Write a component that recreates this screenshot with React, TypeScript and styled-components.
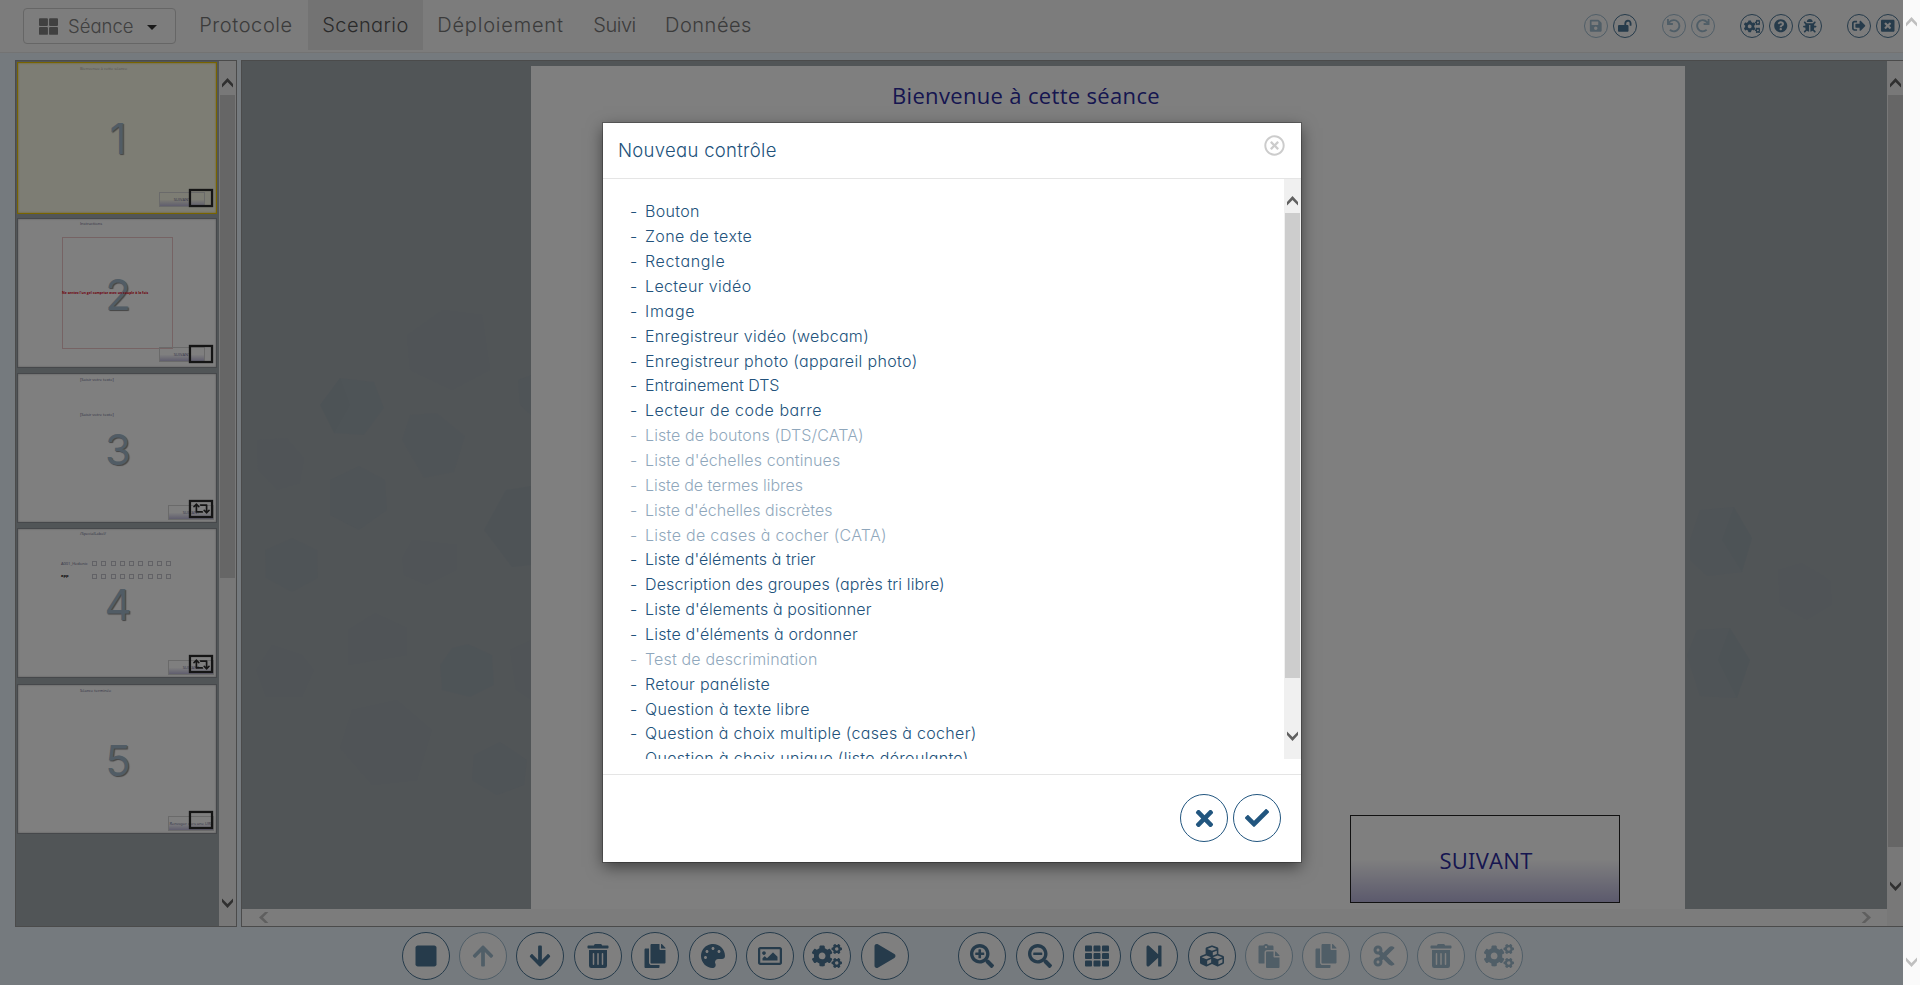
import React from 'react';
import styled, { createGlobalStyle, css } from 'styled-components';
import type { IconType } from 'react-icons';
import {
  FaArrowDown, FaArrowUp, FaBug, FaCheck, FaCogs, FaCopy, FaCubes, FaCut, FaLockOpen, FaPalette, FaPaste,
  FaPlay, FaQuestionCircle, FaRedo, FaRegImage, FaRegTimesCircle, FaRetweet, FaSave, FaSearchMinus,
  FaSearchPlus, FaSignOutAlt, FaStepForward, FaStop, FaTh, FaThLarge, FaTimes, FaTrashAlt, FaUndo, FaWindowClose,
} from 'react-icons/fa';

const GlobalStyle = createGlobalStyle`
  * { box-sizing: border-box; }
  body {
    margin: 0;
    overflow: hidden;
    font-family: Inter, "Liberation Sans", sans-serif;
    font-weight: 300;
    font-feature-settings: "cv11", "ss03";
  }
`;

const Screen = styled.div`
  position: relative;
  display: grid;
  grid-template-columns: 1903px 17px;
  height: 985px;
  overflow: hidden;
`;

const AppArea = styled.div`
  display: flex;
  flex-direction: column;
  min-width: 0;
  background: #ebf5fd;
`;

/* ---------- scroll bars ---------- */

const VTrack = styled.div<{ $bg?: string }>`
  display: flex;
  flex-direction: column;
  justify-content: space-between;
  flex: none;
  width: 17px;
  height: 100%;
  background: ${(p) => p.$bg ?? '#f0f0f0'};
`;
const VButton = styled.div<{ $h: number; $pad: number }>`
  display: flex;
  justify-content: center;
  flex: none;
  height: ${(p) => p.$h}px;
  padding-top: ${(p) => p.$pad}px;
`;
const VThumbArea = styled.div`
  flex: 1;
  padding: 0 1px;
`;
const VThumb = styled.div<{ $h: number }>`
  height: ${(p) => p.$h}px;
  background: #cdcdcd;
`;
const HTrack = styled.div`
  display: flex;
  justify-content: space-between;
  align-items: center;
  height: 17px;
  padding: 0 15px 0 16px;
  background: #f8f8f8;
`;

const turns = { up: 0, right: 90, down: 180, left: 270 };
const Chevron = ({ dir, color = '#606060' }: { dir: keyof typeof turns; color?: string }) => (
  <svg width="11" height="11" viewBox="0 0 11 11">
    <path
      d="M0 7 5.5 1 11 7V10.4L5.5 5 0 10.4Z"
      fill={color}
      transform={`rotate(${turns[dir]} 5.5 5.5)`}
    />
  </svg>
);

const VScroll = ({ thumb, bottom = 28, arrow, bg }: { thumb?: number; bottom?: number; arrow?: string; bg?: string }) => (
  <VTrack $bg={bg}>
    <VButton $h={34} $pad={16}><Chevron dir="up" color={arrow} /></VButton>
    <VThumbArea>{thumb ? <VThumb $h={thumb} /> : null}</VThumbArea>
    <VButton $h={bottom} $pad={0}><Chevron dir="down" color={arrow} /></VButton>
  </VTrack>
);

/* ---------- top bar ---------- */

const TopBar = styled.header`
  display: flex;
  flex: none;
  height: 53px;
  padding: 0 3px 0 23px;
  background: #f8f8f8;
  border-bottom: 1px solid #e7e7e7;
`;
const MenuButton = styled.div`
  display: flex;
  align-items: center;
  width: 153px;
  height: 36px;
  margin: 8px 8px 0 0;
  padding-left: 15px;
  border: 1px solid #ccc;
  border-radius: 4px;
  background: #fafafa;
  color: #808080;
  font-size: 18.5px;
  span { width: 89px; padding-left: 10px; }
`;
const Caret = styled.i`
  border: 5px solid transparent;
  border-top-color: #333;
  border-bottom: 0;
  margin-top: 3px;
`;
const Tab = styled.div<{ $w: number; $active?: boolean; $ls?: number }>`
  display: flex;
  justify-content: center;
  align-items: center;
  width: ${(p) => p.$w}px;
  height: 50px;
  font-size: 20px;
  letter-spacing: ${(p) => p.$ls ?? 0}px;
  color: ${(p) => (p.$active ? '#555' : '#777')};
  background: ${(p) => (p.$active ? '#e7e7e7' : 'transparent')};
`;
const TopTools = styled.div`
  display: flex;
  gap: 25px;
  margin: 14px 0 0 auto;
`;
const ToolGroup = styled.div<{ $gap: number }>`
  display: flex;
  gap: ${(p) => p.$gap}px;
`;
const RoundButton = styled.div<{ $size: number; $off?: boolean; $strong?: boolean; $iconWidth?: number }>`
  display: flex;
  align-items: center;
  justify-content: center;
  flex: none;
  width: ${(p) => p.$size}px;
  height: ${(p) => p.$size}px;
  border: 1px solid;
  border-radius: 50%;
  background: #fff;
  color: ${(p) => (p.$strong ? '#22567f' : p.$off ? '#a0bccf' : '#4c7696')};
  ${(p) => p.$size < 30 && css`background: transparent;`}
  svg {
    flex: none;
    ${(p) => p.$iconWidth && css`width: ${p.$iconWidth}px; height: ${p.$iconWidth}px;`}
  }
`;

/* ---------- work area ---------- */

const Work = styled.main`
  display: flex;
  flex: none;
  gap: 4px;
  height: 867px;
  margin: 7px 0 0 15px;
`;
const SlidePanel = styled.section`
  display: flex;
  width: 222px;
  border: 1px solid #969696;
  background: #a2aaaf;
`;
const SlideList = styled.div`
  display: flex;
  flex-direction: column;
  gap: 5.4px;
  flex: 1;
  padding: 1.2px 2px 0 1px;
`;
const Slide = styled.article<{ $selected?: boolean }>`
  position: relative;
  flex: none;
  height: ${(p) => (p.$selected ? 152 : 150)}px;
  margin-bottom: ${(p) => (p.$selected ? -2 : 0)}px;
  border: 1px solid ${(p) => (p.$selected ? '#f0c800' : '#8c9196')};
  background: ${(p) => (p.$selected ? '#fbfae8' : '#fff')};
  box-shadow: inset 0 0 2px ${(p) => (p.$selected ? '#d8b820' : '#aaa')};
  overflow: hidden;
`;
const SlideNumber = styled.div`
  position: absolute;
  inset: 51px 0 auto 2px;
  text-align: center;
  font-size: 42px;
  line-height: 50px;
  font-weight: 400;
  color: #a3b9ca;
  text-shadow: 1px 1px 1px #888;
`;
const Tiny = styled.div<{ $x: number; $y: number; $color?: string; $bold?: boolean; $size?: number }>`
  position: absolute;
  left: ${(p) => p.$x}px;
  top: ${(p) => p.$y}px;
  font: ${(p) => (p.$bold ? 700 : 400)} ${(p) => p.$size ?? 4}px/6px "Open Sans", sans-serif;
  color: ${(p) => p.$color ?? '#666688'};
  white-space: nowrap;
`;
const TinyButton = styled.div<{ $x: number; $y: number }>`
  position: absolute;
  left: ${(p) => p.$x}px;
  top: ${(p) => p.$y}px;
  width: 46px;
  height: 15px;
  border: 1px solid #d4d4d4;
  background: linear-gradient(transparent 50%, #c0bcdc);
  font: 4px/13px "Open Sans", sans-serif;
  text-align: center;
  color: #6a6a90;
  white-space: nowrap;
`;
const SlideBadge = styled.div`
  position: absolute;
  right: 3px;
  top: 126px;
  display: flex;
  align-items: center;
  justify-content: center;
  width: 24px;
  height: 18px;
  border: 2px solid #2a2a2a;
  box-shadow: 0 0 1px #2a2a2a, inset 0 0 1px #2a2a2a;
  color: #2a2a2a;
`;
const TinyFrame = styled.div`
  position: absolute;
  left: 44px;
  top: 18px;
  width: 111px;
  height: 112px;
  border: 1px solid #ecc6c8;
`;
const TinyChecks = styled.div<{ $y: number }>`
  position: absolute;
  left: 74px;
  top: ${(p) => p.$y}px;
  display: flex;
  gap: 4.3px;
  i { width: 5px; height: 5px; border: 1px solid #c4c4cc; }
`;

const StagePanel = styled.section`
  display: flex;
  flex: 1;
  margin-right: -1px;
  border: 1px solid #969696;
  border-right: 0;
  background: #a2aaaf;
`;
const StageColumn = styled.div`
  display: flex;
  flex-direction: column;
  flex: 1;
`;
const Stage = styled.div`
  position: relative;
  flex: 1;
  padding: 5px 0 0 289px;
`;
const Hexagons = styled.svg`
  position: absolute;
  inset: 0;
`;
const Page = styled.div`
  position: relative;
  display: flex;
  flex-direction: column;
  width: 1154px;
  height: 100%;
  padding: 0 65px 6px;
  background: #fff;
  color: #2c2ca0;
  font-family: "Open Sans", sans-serif;
  font-weight: 400;
`;
const PageTitle = styled.div`
  padding: 13px 0 0 296px;
  font-size: 22px;
  line-height: 32px;
  letter-spacing: 0.33px;
`;
const NextButton = styled.div`
  display: flex;
  align-items: center;
  justify-content: center;
  width: 270px;
  height: 88px;
  margin: auto 0 0 auto;
  padding: 2px 0 0 2px;
  border: 1px solid #222;
  background: linear-gradient(#fff 50%, #b8b4da);
  font-size: 22px;
  letter-spacing: 0.3px;
`;

const hexes: [string, number][] = [
  ['165,335 200,310 240,315 248,370 210,390 168,370', 0.25],
  ['78,405 98,378 132,382 142,408 122,435 92,433', 0.9],
  ['98,378 108,405 92,433 78,405', 0.7],
  ['160,440 168,415 195,413 223,436 212,472 182,478', 0.5],
  ['15,440 45,438 62,458 58,483 35,490 16,470', 0.3],
  ['88,480 117,466 143,480 145,510 117,530 88,515', 0.8],
  ['242,530 264,490 289,486 289,565 270,567', 1.1],
  ['160,558 170,540 215,545 215,570 185,585 162,575', 0.4],
  ['23,550 50,538 75,550 76,578 50,592 24,578', 0.5],
  ['106,630 133,613 165,628 165,655 106,665', 0.4],
  ['14,670 30,645 60,655 72,670 60,697 24,697', 0.4],
  ['198,665 210,648 226,644 250,655 252,685 228,697 200,690', 0.9],
  ['98,748 110,710 155,700 190,730 175,780 130,785', 0.4],
  ['232,755 258,742 285,760 282,785 255,795 230,780', 0.7],
  ['276,380 289,375 289,415 278,405', 0.8],
  ['268,650 289,640 289,700 274,690', 0.4],
  ['1448,540 1458,510 1492,507 1510,538 1500,572 1465,576 1448,560', 0.8],
  ['1492,507 1510,538 1500,572 1480,540', 0.6],
  ['1536,570 1560,563 1588,580 1590,605 1565,620 1538,605', 0.3],
  ['1445,655 1455,630 1488,628 1508,660 1495,698 1458,696', 0.8],
  ['1488,628 1508,660 1495,698 1476,660', 0.6],
];

/* ---------- bottom bar ---------- */

const BottomBar = styled.footer`
  display: flex;
  gap: 49.4px;
  padding: 5px 0 0 401.6px;
`;

/* ---------- dialog ---------- */

const Overlay = styled.div`
  position: absolute;
  left: 0;
  top: 0;
  width: 1903px;
  height: 985px;
  padding: 123px 0 0 603px;
  background: rgba(0, 0, 0, 0.5);
`;
const Dialog = styled.div`
  display: flex;
  flex-direction: column;
  width: 698px;
  height: 739px;
  background: #fff;
  color: #22527b;
  box-shadow: 0 0 0 1px rgba(0, 0, 0, 0.25), 0 5px 15px rgba(0, 0, 0, 0.5);
`;
const DialogHeader = styled.div`
  display: flex;
  justify-content: space-between;
  height: 56px;
  padding: 12px 16px 0 15px;
  border-bottom: 1px solid #e5e5e5;
  font-size: 18.5px;
  line-height: 30px;
  letter-spacing: 0.3px;
`;
const DialogBody = styled.div`
  display: flex;
  justify-content: space-between;
  height: 580px;
  overflow: hidden;
`;
const ControlList = styled.ul`
  margin: 0;
  padding: 20.4px 0 0 27px;
  list-style: none;
`;
const ControlItem = styled.li<{ $off?: boolean; $ls: number }>`
  display: flex;
  height: 24.86px;
  font-size: 16px;
  line-height: 25px;
  letter-spacing: ${(p) => p.$ls}px;
  white-space: nowrap;
  opacity: ${(p) => (p.$off ? 0.5 : 1)};
  &::before { content: "-"; width: 15px; }
`;
const DialogFooter = styled.div`
  display: flex;
  justify-content: flex-end;
  gap: 5px;
  height: 88px;
  margin-top: 15px;
  padding: 19px 20px 0 0;
  border-top: 1px solid #e5e5e5;
`;

type Tool = [IconType, boolean?];
const topTools: Tool[][] = [
  [[FaSave, true], [FaLockOpen]],
  [[FaUndo, true], [FaRedo, true]],
  [[FaCogs], [FaQuestionCircle], [FaBug]],
  [[FaSignOutAlt], [FaWindowClose]],
];
const bottomTools: Tool[][] = [
  [[FaStop], [FaArrowUp, true], [FaArrowDown], [FaTrashAlt], [FaCopy], [FaPalette], [FaRegImage], [FaCogs], [FaPlay]],
  [[FaSearchPlus], [FaSearchMinus], [FaTh], [FaStepForward], [FaCubes], [FaPaste, true], [FaCopy, true], [FaCut, true], [FaTrashAlt, true], [FaCogs, true]],
];
const controls: { label: string; off?: boolean; ls?: number }[] = [
  { label: 'Bouton', ls: 0.3 },
  { label: 'Zone de texte', ls: 0.38 },
  { label: 'Rectangle', ls: 0.65 },
  { label: 'Lecteur vidéo', ls: 0.36 },
  { label: 'Image', ls: 0.7 },
  { label: 'Enregistreur vidéo (webcam)', ls: 0.32 },
  { label: 'Enregistreur photo (appareil photo)', ls: 0.35 },
  { label: 'Entrainement DTS' },
  { label: 'Lecteur de code barre', ls: 0.52 },
  { label: 'Liste de boutons (DTS/CATA)', off: true, ls: 0.1 },
  { label: "Liste d'échelles continues", off: true, ls: 0.1 },
  { label: 'Liste de termes libres', off: true, ls: -0.04 },
  { label: "Liste d'échelles discrètes", off: true },
  { label: 'Liste de cases à cocher (CATA)', off: true, ls: 0.27 },
  { label: "Liste d'éléments à trier", ls: 0.05 },
  { label: 'Description des groupes (après tri libre)', ls: 0.12 },
  { label: "Liste d'élements à positionner", ls: 0.12 },
  { label: "Liste d'éléments à ordonner", ls: 0.18 },
  { label: 'Test de descrimination', off: true, ls: 0.16 },
  { label: 'Retour panéliste', ls: 0.27 },
  { label: 'Question à texte libre', ls: 0.32 },
  { label: 'Question à choix multiple (cases à cocher)', ls: 0.31 },
  { label: 'Question à choix unique (liste déroulante)', ls: 0.32 },
];

const Tools = ({ groups, size, icon, gap }: { groups: Tool[][]; size: number; icon: number; gap: number }) => (
  <>
    {groups.map((group, g) => (
      <ToolGroup key={g} $gap={gap}>
        {group.map(([Icon, off], i) => (
          <RoundButton key={i} $size={size} $off={off} $iconWidth={Icon === FaCogs ? icon * 1.25 : icon}>
            <Icon />
          </RoundButton>
        ))}
      </ToolGroup>
    ))}
  </>
);

export default function App() {
  return (
    <Screen>
      <GlobalStyle />
      <AppArea>
        <TopBar>
          <MenuButton><FaThLarge size={19} /><span>Séance</span><Caret /></MenuButton>
          <Tab $w={124} $ls={0.6}>Protocole</Tab>
          <Tab $w={115} $ls={0.4} $active>Scenario</Tab>
          <Tab $w={155} $ls={0.8}>Déploiement</Tab>
          <Tab $w={73} $ls={-0.5}>Suivi</Tab>
          <Tab $w={115} $ls={0.5}>Données</Tab>
          <TopTools><Tools groups={topTools} size={24} icon={13.5} gap={5} /></TopTools>
        </TopBar>

        <Work>
          <SlidePanel>
            <SlideList>
              <Slide $selected>
                <Tiny $x={62} $y={3} $color="#aaa">Bienvenue à cette séance</Tiny>
                <TinyButton $x={141} $y={129}>SUIVANT</TinyButton>
                <SlideNumber>1</SlideNumber>
                <SlideBadge />
              </Slide>
              <Slide>
                <Tiny $x={62} $y={2}>Instructions</Tiny>
                <TinyFrame />
                <SlideNumber>2</SlideNumber>
                <Tiny $x={44} $y={71} $color="#e00018" $bold $size={3.4}>Ne sentez l'un gel comprise avec un couple à la fois</Tiny>
                <TinyButton $x={141} $y={128}>SUIVANT</TinyButton>
                <SlideBadge />
              </Slide>
              <Slide>
                <Tiny $x={62} $y={3}>[Saisir votre texte]</Tiny>
                <Tiny $x={62} $y={38}>[Saisir votre texte]</Tiny>
                <SlideNumber>3</SlideNumber>
                <TinyButton $x={150} $y={131}>SUIVANT</TinyButton>
                <SlideBadge><FaRetweet size={17} /></SlideBadge>
              </Slide>
              <Slide>
                <Tiny $x={62} $y={2}>/SpecialLabel/</Tiny>
                <Tiny $x={43} $y={32}>A001_Hedonic</Tiny>
                <TinyChecks $y={32}>{Array.from({ length: 9 }, (_, i) => <i key={i} />)}</TinyChecks>
                <Tiny $x={43} $y={44} $color="#111" $bold>app</Tiny>
                <TinyChecks $y={45}>{Array.from({ length: 9 }, (_, i) => <i key={i} />)}</TinyChecks>
                <SlideNumber>4</SlideNumber>
                <TinyButton $x={150} $y={131}>SUIVANT</TinyButton>
                <SlideBadge><FaRetweet size={17} /></SlideBadge>
              </Slide>
              <Slide>
                <Tiny $x={62} $y={3}>Séance terminée</Tiny>
                <SlideNumber>5</SlideNumber>
                <TinyButton $x={150} $y={131}>Renvoyer vers une URL</TinyButton>
                <SlideBadge />
              </Slide>
            </SlideList>
            <VScroll thumb={483} />
          </SlidePanel>

          <StagePanel>
            <StageColumn>
              <Stage>
                <Hexagons width="1645" height="848">
                  {hexes.map(([points, o], i) => (
                    <polygon key={i} points={points} transform="translate(0 -61)" fill="#8fa0a8" opacity={o * 0.25} />
                  ))}
                </Hexagons>
                <Page>
                  <PageTitle>Bienvenue à cette séance</PageTitle>
                  <NextButton>SUIVANT</NextButton>
                </Page>
              </Stage>
              <HTrack><Chevron dir="left" color="#bfbfbf" /><Chevron dir="right" color="#bfbfbf" /></HTrack>
            </StageColumn>
            <VScroll thumb={752} bottom={45} />
          </StagePanel>
        </Work>

        <BottomBar><Tools groups={bottomTools} size={48} icon={24} gap={9.4} /></BottomBar>
      </AppArea>
      <VScroll bg="#fafafa" arrow="#bfbfbf" />

      <Overlay>
        <Dialog>
          <DialogHeader>Nouveau contrôle<FaRegTimesCircle size={21} color="#ccc" /></DialogHeader>
          <DialogBody>
            <ControlList>
              {controls.map((c) => (
                <ControlItem key={c.label} $off={c.off} $ls={c.ls ?? 0}>{c.label}</ControlItem>
              ))}
            </ControlList>
            <VScroll thumb={465} />
          </DialogBody>
          <DialogFooter>
            <RoundButton $size={48} $strong><FaTimes size={25} /></RoundButton>
            <RoundButton $size={48} $strong><FaCheck size={24} /></RoundButton>
          </DialogFooter>
        </Dialog>
      </Overlay>
    </Screen>
  );
}
